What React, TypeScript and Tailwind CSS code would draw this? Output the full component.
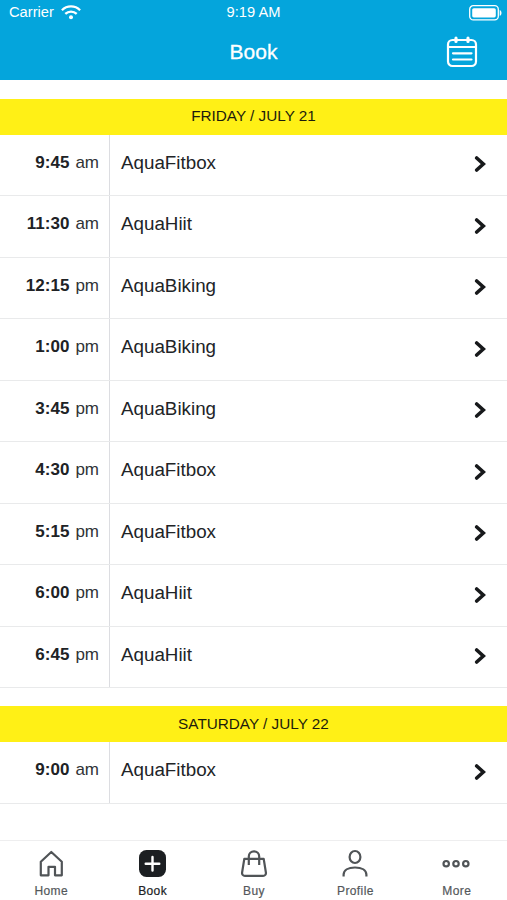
import type { ReactNode } from "react";

type Session = { time: string; period: string; name: string };

const friday: Session[] = [
  { time: "9:45", period: "am", name: "AquaFitbox" },
  { time: "11:30", period: "am", name: "AquaHiit" },
  { time: "12:15", period: "pm", name: "AquaBiking" },
  { time: "1:00", period: "pm", name: "AquaBiking" },
  { time: "3:45", period: "pm", name: "AquaBiking" },
  { time: "4:30", period: "pm", name: "AquaFitbox" },
  { time: "5:15", period: "pm", name: "AquaFitbox" },
  { time: "6:00", period: "pm", name: "AquaHiit" },
  { time: "6:45", period: "pm", name: "AquaHiit" },
];

const saturday: Session[] = [{ time: "9:00", period: "am", name: "AquaFitbox" }];

function WifiIcon() {
  return (
    <svg width="20" height="15" viewBox="0 0 20 15" fill="none" stroke="white" strokeWidth="2.3">
      <path d="M0.9 5.2C6 0.2 14 0.2 19.1 5.2" />
      <path d="M4.3 8.9C7.5 5.8 12.5 5.8 15.7 8.9" />
      <circle cx="10" cy="12.2" r="2" fill="white" stroke="none" />
    </svg>
  );
}

function BatteryIcon() {
  return (
    <svg width="33" height="16" viewBox="0 0 33 16" fill="none">
      <rect x="0.7" y="0.7" width="28.6" height="14.2" rx="3.6" stroke="white" strokeWidth="1.3" />
      <rect x="3.2" y="3.2" width="23.6" height="9.2" rx="1.6" fill="white" />
      <path d="M30.7 5v5.8c1.2-.5 1.8-1.6 1.8-2.9S31.9 5.5 30.700 5z" fill="white" />
    </svg>
  );
}

function CalendarIcon() {
  return (
    <svg width="32" height="32" viewBox="0 0 32 32" fill="none" stroke="white" strokeWidth="2.2" strokeLinecap="round">
      <rect x="2" y="4" width="28" height="26" rx="4.5" />
      <path d="M2 11h28M7 17.300h18.500M7 23.500h18.500" />
      <path d="M10 2.200v3.300M22 2.200v3.300" strokeWidth="3.200" />
    </svg>
  );
}

function Chevron() {
  return (
    <svg className="mt-[21.500px] mr-[20px] shrink-0" width="13" height="16" viewBox="0 0 13 16" fill="none" stroke="#17191b" strokeWidth="3.600">
      <path d="M2.700 2 9.300 8 2.700 14" strokeLinecap="round" />
    </svg>
  );
}

function Day({ title, sessions }: { title: string; sessions: Session[] }) {
  return (
    <section>
      <h2 className="flex h-9 items-center justify-center bg-[#fff016] text-[15.300px] text-[#1d1c0c]">{title}</h2>
      <ul>
        {sessions.map((s) => (
          <li key={s.time} className="flex h-[61.5px] border-b border-[#e9eaeb]">
            <div className="w-[110px] shrink-0 border-r border-[#dcdde1] pt-[17px] pr-[10px] text-right text-[17px] leading-[22px] text-[#303336] [word-spacing:1.3px]">
              <b className="text-[#202225]">{s.time}</b> {s.period}
            </div>
            <div className="flex-1 pt-4 pl-[11px] text-[18.800px] leading-6 text-[#212427]">{s.name}</div>
            <Chevron />
          </li>
        ))}
      </ul>
    </section>
  );
}

function Tab({ label, active, children }: { label: string; active?: boolean; children: ReactNode }) {
  return (
    <a className={active ? "flex flex-1 flex-col items-center pt-2 text-[#202225]" : "flex flex-1 flex-col items-center pt-2 text-[#54585b]"}>
      <svg width="30" height="30" viewBox="0 0 30 30" fill="none" stroke="#505457" strokeWidth="2.200">
        {children}
      </svg>
      <span className="mt-[4px] pl-px text-[12px] leading-4 tracking-[0.4px] [-webkit-text-stroke:0.2px_currentColor]">{label}</span>
    </a>
  );
}

export default function App() {
  return (
    <div className="flex h-[900px] w-[507px] flex-col overflow-hidden bg-white font-['Liberation_Sans',Arial,sans-serif]">
      <header className="h-20 shrink-0 bg-[#04a5dc] text-white">
        <div className="grid h-[25px] grid-cols-3 items-center pr-[7px] pl-[9px] text-[14.700px]">
          <div className="flex items-center gap-[7px]">
            Carrier <WifiIcon />
          </div>
          <div className="-mt-px pr-0.5 text-center">9:19 AM</div>
          <div className="-mr-0.5 flex justify-end">
            <BatteryIcon />
          </div>
        </div>
        <div className="grid h-[54px] grid-cols-3 items-center pr-[29px] pl-[29px]">
          <h1 className="col-start-2 text-center text-[21px] leading-7 [-webkit-text-stroke:0.3px_currentColor]">Book</h1>
          <div className="flex justify-end">
            <CalendarIcon />
          </div>
        </div>
      </header>
      <main className="flex flex-1 flex-col gap-[18px] pt-[18.500px]">
        <Day title="FRIDAY / JULY 21" sessions={friday} />
        <Day title="SATURDAY / JULY 22" sessions={saturday} />
      </main>
      <nav className="flex h-[60px] shrink-0 border-t border-[#eeeeef]">
        <Tab label="Home">
          <path d="M4.800 12.800 15.300 3l10.500 9.800V26.300H19V17.800h-6.500v8.500H4.800z" strokeLinejoin="round" />
        </Tab>
        <Tab label="Book" active>
          <rect x="2" y="1" width="27" height="27" rx="7.500" fill="#1c1f22" stroke="none" />
          <path d="M15.500 8v13.500M8.700 14.700h13.600" stroke="white" strokeWidth="2.400" strokeLinecap="round" />
        </Tab>
        <Tab label="Buy">
          <path d="M5.300 9.800h19.400l2.200 13.700c.3 2-.9 3.300-2.800 3.300H5.900c-1.900 0-3.100-1.300-2.800-3.300zM9.800 16V7.500a5.200 5.200 0 0 1 10.400 0V16" strokeLinejoin="round" />
        </Tab>
        <Tab label="Profile">
          <ellipse cx="15" cy="8" rx="5.400" ry="6" />
          <path d="M3.600 27.500v-1.700c0-4.500 4.600-7.300 11.400-7.300s11.400 2.800 11.400 7.300v1.700" />
        </Tab>
        <Tab label="More">
          <circle cx="5.200" cy="14.700" r="2.700" />
          <circle cx="15" cy="14.700" r="2.700" />
          <circle cx="24.800" cy="14.700" r="2.700" />
        </Tab>
      </nav>
    </div>
  );
}
